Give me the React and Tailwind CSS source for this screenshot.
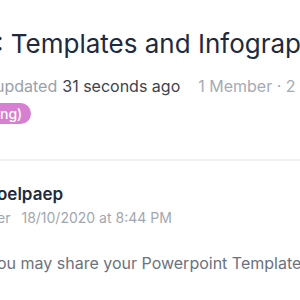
import React from "react";

const App = () => {
  return (
    <div className="w-[300px] h-[300px] overflow-hidden bg-white font-['Inter',sans-serif]">
      <div className="pt-[28px]">
        <h1 className="-ml-[4px] whitespace-nowrap text-[26px] leading-[32px] text-[#1f2a3c]">
          : Templates and Infographics
        </h1>
        <div className="mt-[16px] -ml-[5px] flex items-center whitespace-nowrap text-[16px] leading-[20px]">
          <span className="text-[#9aa1ac]">updated</span>
          <span className="ml-[5px] text-[#3b4350]">31 seconds ago</span>
          <span className="ml-[18px] text-[#a5abb5]">1 Member · 2 Posts</span>
        </div>
        <div className="mt-[7px] -ml-[20px] flex">
          <span className="rounded-full bg-[#d77fd1] pl-[20px] pr-[9px] h-[21px] flex items-center text-[14px] font-medium text-white whitespace-nowrap">
            ng)
          </span>
        </div>
        <div className="mt-[35px] h-[2px] bg-[#f0f0f2]" />
        <div className="pt-[22px] -ml-[3px] whitespace-nowrap">
          <div className="text-[17px] leading-[22px] font-semibold text-[#1f2a3c]">oelpaep</div>
          <div className="mt-[4px] flex text-[14px] leading-[18px] text-[#a1a7b1]">
            <span>er</span>
            <span className="ml-[11px]">18/10/2020 at 8:44 PM</span>
          </div>
          <p className="mt-[26px] text-[16px] leading-[20px] text-[#6b7280]">
            ou may share your Powerpoint Templates and Infographics here.
          </p>
        </div>
      </div>
    </div>
  );
};

export default App;
